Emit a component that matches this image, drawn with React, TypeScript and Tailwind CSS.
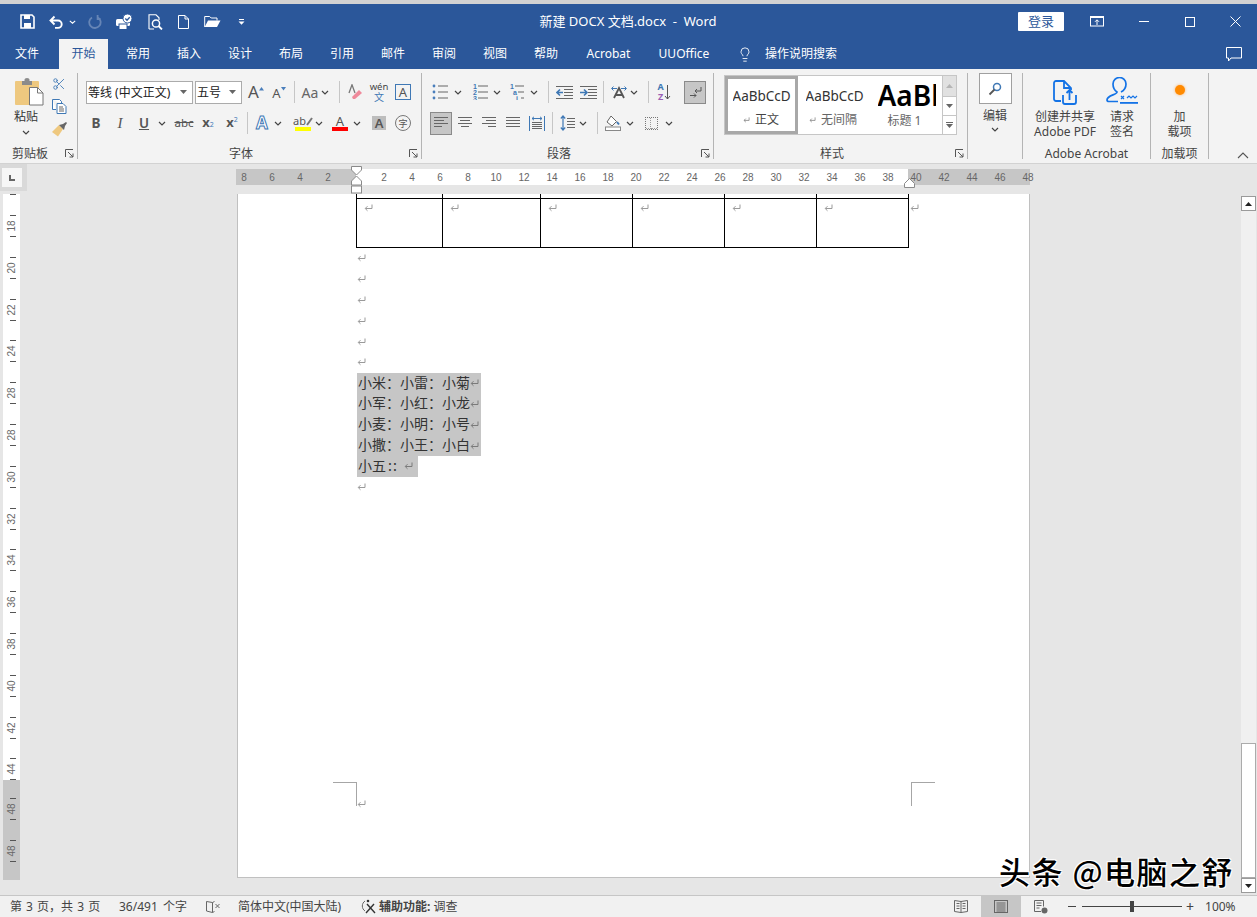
import React from "react";
import { Lightbulb, Scissors } from "lucide-react";

const slot = "flex items-center justify-center shrink-0";

function Chev({ className = "" }: { className?: string }) {
  return (
    <svg width="8" height="5" viewBox="0 0 8 5" className={"shrink-0 " + className}>
      <path d="M1 1l3 3 3-3" fill="none" stroke="#444" strokeWidth="1.2" />
    </svg>
  );
}
function Sep({ className = "" }: { className?: string }) {
  return <div className={"w-px h-[22px] bg-[#c6c6c6] shrink-0 " + className} />;
}
function Launcher() {
  return (
    <div className="w-[17px] pl-[5px] shrink-0 flex items-center">
      <svg width="9" height="9" viewBox="0 0 9 9">
        <path d="M.5 8V.5H8M3 3l5 5M8 4.5V8H4.5" fill="none" stroke="#555" strokeWidth="1" />
      </svg>
    </div>
  );
}
function Footer({ label, launcher = true }: { label: string; launcher?: boolean }) {
  return (
    <div className="h-[12px] flex items-center mt-auto">
      <div className="flex-1 text-center leading-[12px] pt-[2px] whitespace-nowrap">{label}</div>
      {launcher && <Launcher />}
    </div>
  );
}
function Mark({ className = "text-[#9a9a9a]" }: { className?: string }) {
  return (
    <svg width="9" height="8" viewBox="0 0 9 8" className={"shrink-0 " + className}>
      <path d="M8 .5v4H1.500M3.500 2.200L1.200 4.500l2.300 2.300" fill="none" stroke="currentColor" strokeWidth="1" />
    </svg>
  );
}
function Lines({ rows, w = 14 }: { rows: [number, number][]; w?: number }) {
  return (
    <svg width={w} height="14" viewBox={`0 0 ${w} 14`}>
      {rows.map(([a, b], i) => (
        <rect key={i} x={a} y={1 + i * 3} width={b - a} height="1" fill="#666" />
      ))}
    </svg>
  );
}
function ListIcon({ kind }: { kind: "b" | "n" | "m" }) {
  const digits = kind === "m" ? ["1", "a", "i"] : ["1", "2", "3"];
  return (
    <svg width="16" height="16" viewBox="0 0 16 16">
      {[2, 8, 14].map((y, i) => (
        <g key={y}>
          {kind === "b" && <circle cx="2" cy={y} r="1.400" fill="#4a7ebb" />}
          {kind !== "b" && (
            <text
              x={kind === "m" ? 1 + i * 3 : 1}
              y={y + 2.500}
              fontSize="7"
              fontWeight="700"
              fill="#3f78b5"
              fontFamily="Liberation Sans, sans-serif"
            >
              {digits[i]}
            </text>
          )}
          <rect
            x={kind === "m" ? 6 + i * 3 : 6}
            y={y - 0.500}
            width={kind === "m" ? 9 - i * 3 : 10}
            height="1"
            fill="#666"
          />
        </g>
      ))}
    </svg>
  );
}
function Indent({ dir }: { dir: "l" | "r" }) {
  return (
    <svg width="17" height="13" viewBox="0 0 17 13">
      {[0, 3, 6, 9, 12].map((y) => (
        <rect key={y} x={y === 0 || y === 12 ? 0 : 8} y={y} width={y === 0 || y === 12 ? 17 : 9} height="1" fill="#666" />
      ))}
      <path d={dir === "l" ? "M7 6.500H1M4 3.500l-3 3 3 3" : "M0 6.500h6M4 3.500l3 3-3 3"} fill="none" stroke="#3f78b5" strokeWidth="1.600" />
    </svg>
  );
}
function Tiny({ children, w, h }: { children: React.ReactNode; w: number; h: number }) {
  return (
    <svg width={w} height={h} viewBox={`0 0 ${w} ${h}`} className="shrink-0">
      {children}
    </svg>
  );
}

const hTabs = ["常用", "插入", "设计", "布局", "引用", "邮件", "审阅", "视图", "帮助"];
const leftNums = [8, 6, 4, 2];
const midNums = [2, 4, 6, 8, 10, 12, 14, 16, 18, 20, 22, 24, 26, 28, 30, 32, 34, 36, 38];
const rightNums = [40, 42, 44, 46, 48];
const vWhite = [18, 20, 22, 24, 28, 28, 30, 32, 34, 36, 38, 40, 42, 44];
const vGray = [48, 48];
const cells = ["w-[86px]", "w-[98px]", "w-[92px]", "w-[92px]", "w-[92px]", "w-[92px]"];
const selected = ["小米：小雷：小菊", "小军：小红：小龙", "小麦：小明：小号", "小撒：小王：小白"];

function VCell({ n }: { n: number }) {
  return (
    <div className="h-[41.8px] shrink-0 flex flex-col">
      <div className="h-px w-[6px] ml-[7px] bg-[#555] shrink-0" />
      <div className="h-[20px] flex items-center justify-center shrink-0 pl-[1px]">
        <span className="-rotate-90 text-[10px] leading-none text-[#666] font-['Liberation_Sans',sans-serif]">{n}</span>
      </div>
      <div className="h-px w-[6px] ml-[7px] bg-[#555] shrink-0" />
    </div>
  );
}
function HNum({ n }: { n: number }) {
  return <div className="w-7 shrink-0 text-center">{n}</div>;
}

export default function App() {
  return (
    <div className="relative w-[1257px] h-[917px] overflow-hidden flex flex-col bg-[#e6e6e6] text-[12px] text-[#444] font-['Noto_Sans','Noto_Sans_CJK_SC',sans-serif]">
      {/* window top edge */}
      <div className="h-[4px] shrink-0 bg-[#d2d2d2]" />

      {/* title bar */}
      <div className="h-[35px] shrink-0 bg-[#2b579a] flex items-center text-white">
        <div className={slot + " w-[14px] ml-[20px]"}>
          <Tiny w={15} h={15}>
            <path d="M1 1h11l2 2v11H1z" fill="none" stroke="#fff" strokeWidth="1.600" />
            <rect x="4" y="1" width="6" height="4" fill="#fff" />
            <rect x="4" y="9" width="7" height="5" fill="#fff" />
          </Tiny>
        </div>
        <div className={slot + " w-[15px] ml-[15px]"}>
          <Tiny w={15} h={14}>
            <path d="M1.500 5.500H9a3.700 3.700 0 0 1 0 7.400H6M5.500 1.500l-4 4 4 4" fill="none" stroke="#fff" strokeWidth="1.900" />
          </Tiny>
        </div>
        <div className="ml-[5px] flex">
          <Tiny w={7} h={4}>
            <path d="M.8.8l2.700 2.400L6.200.8" fill="none" stroke="#fff" strokeWidth="1.100" />
          </Tiny>
        </div>
        <div className={slot + " w-[14px] ml-[12px]"}>
          <Tiny w={14} h={14}>
            <path d="M9.500 2.200a5.700 5.700 0 1 1-5.500.2M9.600 0v4.200h3.200" fill="none" stroke="#6685b6" strokeWidth="1.800" />
          </Tiny>
        </div>
        <div className={slot + " w-[17px] ml-[14px]"}>
          <Tiny w={17} h={16}>
            <rect x="0" y="5" width="14" height="7" rx="1.500" fill="#fff" />
            <rect x="3" y="10" width="8" height="5.500" fill="#fff" stroke="#2b579a" />
            <circle cx="11.500" cy="4.500" r="4.500" fill="#fff" stroke="#2b579a" />
            <path d="M9.300 4.500l1.700 1.700 2.700-3" fill="none" stroke="#2b579a" strokeWidth="1.300" />
          </Tiny>
        </div>
        <div className={slot + " w-[15px] ml-[15px]"}>
          <Tiny w={15} h={16}>
            <path d="M1 15V.8h7l3 3V6M1 15h5" fill="none" stroke="#fff" strokeWidth="1.100" />
            <circle cx="8" cy="9.500" r="3.600" fill="none" stroke="#fff" strokeWidth="1.500" />
            <path d="M10.500 12l3.500 3.500" stroke="#fff" strokeWidth="1.800" />
          </Tiny>
        </div>
        <div className={slot + " w-[12px] ml-[14px]"}>
          <Tiny w={11} h={14}>
            <path d="M.5 13.500V.5h6.500l3.500 3.500v9.500zM7 .5V4h3.500" fill="none" stroke="#fff" strokeWidth="1" />
          </Tiny>
        </div>
        <div className={slot + " w-[17px] ml-[15px]"}>
          <Tiny w={17} h={13}>
            <path d="M.7 12V1.500h5l1.500 1.500H13v2.500" fill="none" stroke="#fff" strokeWidth="1" />
            <path d="M.7 12L4 5.500h12.500L13 12z" fill="#fff" />
          </Tiny>
        </div>
        <div className={slot + " w-[7px] ml-[17px]"}>
          <Tiny w={7} h={6}>
            <rect x="1" y="0" width="5" height="1" fill="#fff" />
            <path d="M.5 2.500h6L3.500 5.800z" fill="#fff" />
          </Tiny>
        </div>
        <div className="w-[300px] ml-[233px] text-center text-[13px] whitespace-pre leading-none">新建 DOCX 文档.docx  -  Word</div>
        <div className={slot + " ml-[240px] w-[46px] h-[19px] bg-white rounded-[1px] text-[13px] text-[#2b579a]"}>登录</div>
        <div className={slot + " w-[14px] ml-[26px]"}>
          <Tiny w={14} h={11}>
            <rect x=".5" y=".5" width="13" height="9.500" fill="none" stroke="#fff" />
            <rect x="0" y="0" width="14" height="2" fill="#fff" />
            <path d="M7 9V4M5 5.800l2-2 2 2" fill="none" stroke="#fff" />
          </Tiny>
        </div>
        <div className={slot + " w-[11px] ml-[34px]"}>
          <div className="w-[10px] h-px bg-white" />
        </div>
        <div className={slot + " w-[11px] ml-[35px]"}>
          <div className="w-[10px] h-[10px] border border-white" />
        </div>
        <div className={slot + " w-[11px] ml-[35px]"}>
          <Tiny w={11} h={11}>
            <path d="M.5.5l10 10M10.500.5l-10 10" stroke="#fff" strokeWidth="1" />
          </Tiny>
        </div>
      </div>

      {/* tabs */}
      <div className="h-[30px] shrink-0 bg-[#2b579a] flex items-center text-white text-[12px] whitespace-nowrap">
        <div className="w-[59px] pl-[15px]">文件</div>
        <div className={slot + " w-[49px] h-full bg-[#f3f3f3] text-[#2b579a]"}>开始</div>
        <div className="w-[4.5px] shrink-0" />
        {hTabs.map((t) => (
          <div key={t} className="w-[51px] text-center shrink-0">
            {t}
          </div>
        ))}
        <div className="ml-[13.5px] w-[47px] text-center">Acrobat</div>
        <div className="ml-[26px] w-[52px] text-center">UUOffice</div>
        <div className={slot + " ml-[27px] w-[16px]"}>
          <Lightbulb size={17} strokeWidth={1.300} color="#fff" />
        </div>
        <div className="ml-[12px]">操作说明搜索</div>
        <div className={slot + " ml-[389px] w-[16px]"}>
          <Tiny w={16} h={15}>
            <path d="M.5.5h15v10.500H5L2.500 14v-3H.5z" fill="none" stroke="#fff" />
          </Tiny>
        </div>
      </div>

      {/* ribbon */}
      <div className="h-[95px] shrink-0 bg-[#f3f3f3] border-b border-[#d2d2d2] pt-[4px] flex items-start">
        {/* clipboard */}
        <div className="w-[78px] h-[86px] border-r border-[#b4b4b4] shrink-0 flex flex-col">
          <div className="flex">
            <div className="w-[52px] shrink-0 flex flex-col items-center pt-[5px]">
              <div className="ml-[7px] h-[27px]">
                <Tiny w={29} h={28}>
                  <rect x="0" y="3" width="24" height="24" rx="1" fill="#eec87f" />
                  <path d="M7 3h2.500V1.500a2.500 1.500 0 0 1 5 0V3H17v4H7z" fill="#8b8b8b" />
                  <path d="M14.500 9.500h8l5.500 5.500v12H14.500z" fill="#fff" stroke="#777" />
                  <path d="M22.500 9.500V15H28" fill="none" stroke="#777" />
                </Tiny>
              </div>
              <div className="mt-[4px] leading-[16px] text-[#333]">粘贴</div>
              <Chev className="mt-[5px]" />
            </div>
            <div className="flex flex-col -mt-[1px] w-[14px]">
              <div className={slot + " h-[23px]"}>
                <Scissors size={16} color="#3f78b5" strokeWidth={1.500} />
              </div>
              <div className={slot + " h-[23px]"}>
                <Tiny w={15} h={15}>
                  <path d="M.5.5h7l2 2v2M.5.5v10h3.500" fill="#fff" stroke="#3f78b5" />
                  <path d="M5 4.500h6l3 3v7H5z" fill="#fff" stroke="#3f78b5" />
                  <path d="M7 8h4M7 10h5M7 12h5" stroke="#666" />
                </Tiny>
              </div>
              <div className={slot + " h-[23px]"}>
                <Tiny w={16} h={15}>
                  <path d="M8 3l4 4-5 7.500L1 10z" fill="#eec87f" />
                  <path d="M8 3l4-1 3-2 1 1-2 3-1 4z" fill="#666" />
                </Tiny>
              </div>
            </div>
          </div>
          <Footer label="剪贴板" />
        </div>

        {/* font */}
        <div className="w-[344px] h-[86px] border-r border-[#b4b4b4] shrink-0 flex flex-col">
          <div className="flex items-center h-[24px] mt-[7px]">
            <div className="ml-[8px] w-[107px] h-[23px] bg-white border border-[#ababab] flex items-center pl-[1px] pr-[5px] justify-between whitespace-nowrap text-[#222]">
              <span className="pt-px">等线 (中文正文)</span>
              <Tiny w={7} h={4}>
                <path d="M0 0h7L3.500 4z" fill="#666" />
              </Tiny>
            </div>
            <div className="ml-[2px] w-[47px] h-[23px] bg-white border border-[#ababab] flex items-center pl-[1px] pr-[5px] justify-between text-[#222]">
              <span className="pt-px">五号</span>
              <Tiny w={7} h={4}>
                <path d="M0 0h7L3.500 4z" fill="#666" />
              </Tiny>
            </div>
            <div className={slot + " ml-[3px] w-[22px] text-[17px] leading-[20px] text-[#555]"}>
              A
              <Tiny w={5} h={11}>
                <path d="M0 3.500h5L2.500 0z" fill="#4a7ebb" />
              </Tiny>
            </div>
            <div className={slot + " ml-[1px] w-[22px] text-[13px] leading-[20px] text-[#555] pt-[2px]"}>
              A
              <Tiny w={5} h={13}>
                <path d="M0 0h5L2.500 3.500z" fill="#4a7ebb" />
              </Tiny>
            </div>
            <Sep className="ml-[4px]" />
            <div className={slot + " ml-[4px] w-[22px] text-[14px] text-[#666]"}>Aa</div>
            <Chev />
            <Sep className="ml-[10px]" />
            <div className={slot + " ml-[4px] w-[22px]"}>
              <Tiny w={16} h={16}>
                <path d="M2 9L5 .8 8 9" fill="none" stroke="#777" strokeWidth="1.300" />
                <path d="M5 13l7-7 3 3-7 6H6z" fill="#ef8a9b" />
              </Tiny>
            </div>
            <div className={slot + " ml-[2px] w-[22px] flex-col text-[9.5px] text-[#444]"}>
              <span className="leading-[11px]">wén</span>
              <span className="text-[#3f78b5] text-[10px] leading-[11px]">文</span>
            </div>
            <div className={slot + " ml-[2px] w-[22px]"}>
              <div className="w-[16px] h-[16px] border border-[#3f78b5] flex items-center justify-center text-[13px] leading-none text-[#555]">A</div>
            </div>
          </div>
          <div className="flex items-center h-[24px] mt-[7px] text-[#555]">
            <div className={slot + " ml-[6px] w-[24px] font-bold text-[13.5px]"}>B</div>
            <div className={slot + " w-[24px] italic text-[15px] font-['Liberation_Serif',serif]"}>I</div>
            <div className={slot + " w-[24px] underline font-semibold text-[13.5px]"}>U</div>
            <Chev className="ml-[2px]" />
            <div className={slot + " ml-[6px] w-[24px] line-through text-[11.5px]"}>abc</div>
            <div className={slot + " w-[24px] font-bold text-[13px]"}>
              x<sub className="text-[#3f78b5] text-[7px] font-normal">2</sub>
            </div>
            <div className={slot + " w-[24px] font-bold text-[13px]"}>
              x<sup className="text-[#3f78b5] text-[7px] font-normal">2</sup>
            </div>
            <Sep className="ml-[3px]" />
            <div className={slot + " ml-[2px] w-[24px] text-[17px] font-bold text-white [-webkit-text-stroke:1px_#3f78b5]"}>A</div>
            <Chev />
            <div className={slot + " ml-[9px] w-[24px] flex-col"}>
              <div className="flex items-center h-[11px]">
                <span className="text-[11px] leading-[11px]">ab</span>
                <Tiny w={7} h={10}>
                  <path d="M1 9l5-7" stroke="#777" strokeWidth="2" />
                </Tiny>
              </div>
              <div className="w-[16px] h-[4px] bg-[#ffff00] mt-[1px]" />
            </div>
            <Chev />
            <div className={slot + " ml-[5px] w-[24px] flex-col"}>
              <span className="text-[13px] leading-[12px]">A</span>
              <div className="w-[16px] h-[4px] bg-[#ff0000]" />
            </div>
            <Chev className="ml-[1px]" />
            <div className={slot + " ml-[6px] w-[24px]"}>
              <div className="w-[14px] h-[14px] bg-[#bdbdbd] flex items-center justify-center text-[13px] leading-none font-semibold">A</div>
            </div>
            <div className={slot + " w-[24px]"}>
              <div className="w-[16px] h-[16px] rounded-full border border-[#777] flex items-center justify-center text-[9px] leading-none">字</div>
            </div>
          </div>
          <Footer label="字体" />
        </div>

        {/* paragraph */}
        <div className="w-[292px] h-[86px] border-r border-[#b4b4b4] shrink-0 flex flex-col">
          <div className="flex items-center h-[24px] mt-[7px]">
            <div className={slot + " ml-[6px] w-[24px]"}><ListIcon kind="b" /></div>
            <Chev className="ml-[2px]" />
            <div className={slot + " ml-[6px] w-[24px]"}><ListIcon kind="n" /></div>
            <Chev className="ml-[1px]" />
            <div className={slot + " ml-[4px] w-[24px]"}><ListIcon kind="m" /></div>
            <Chev className="ml-[1px]" />
            <Sep className="ml-[10px]" />
            <div className={slot + " ml-[3px] w-[24px]"}><Indent dir="l" /></div>
            <div className={slot + " w-[24px]"}><Indent dir="r" /></div>
            <Sep className="ml-[3px]" />
            <div className={slot + " ml-[4px] w-[22px]"}>
              <Tiny w={16} h={14}>
                <path d="M3 13L8 3l5 10M5 10h6" fill="none" stroke="#555" strokeWidth="1.800" />
                <path d="M1 3.500h5M2.500 1.500l-2 2 2 2M15 3.500h-5M13.500 1.500l2 2-2 2" fill="none" stroke="#3f78b5" strokeWidth="1" />
              </Tiny>
            </div>
            <Chev />
            <Sep className="ml-[10px]" />
            <div className={slot + " ml-[3px] w-[24px]"}>
              <div className="flex flex-col text-[9px] font-bold items-center">
                <span className="text-[#3f78b5] leading-[10px]">A</span>
                <span className="text-[#9a5fb4] leading-[10px]">Z</span>
              </div>
              <Tiny w={7} h={15}>
                <path d="M3.500 0v14M1 11l2.500 3L6 11" fill="none" stroke="#555" />
              </Tiny>
            </div>
            <div className={slot + " ml-[8px] w-[22px] h-[23px] bg-[#c6c6c6] border border-[#8a8a8a]"}>
              <Tiny w={13} h={13}>
                <path d="M12 1v4H6M8 3L6 5l2 2M1 9.500h6M5 7.500l2 2-2 2" fill="none" stroke="#555" />
              </Tiny>
            </div>
          </div>
          <div className="flex items-center h-[24px] mt-[7px]">
            <div className={slot + " ml-[8px] w-[22px] h-[23px] bg-[#c6c6c6] border border-[#8a8a8a]"}>
              <Lines rows={[[0, 14], [0, 10], [0, 14], [0, 8]]} />
            </div>
            <div className={slot + " ml-[2px] w-[22px]"}><Lines rows={[[0, 14], [2, 12], [0, 14], [3, 11]]} /></div>
            <div className={slot + " ml-[2px] w-[22px]"}><Lines rows={[[0, 14], [4, 14], [0, 14], [6, 14]]} /></div>
            <div className={slot + " ml-[2px] w-[22px]"}><Lines rows={[[0, 14], [0, 14], [0, 14], [0, 14]]} /></div>
            <div className={slot + " ml-[2px] w-[22px]"}>
              <Tiny w={16} h={15}>
                <path d="M.5 0v15M15.500 0v15" stroke="#3f78b5" />
                <path d="M3 2.500h10M5 .8L3 2.500l2 1.700M11 .8l2 1.700-2 1.700" fill="none" stroke="#3f78b5" />
                <path d="M3 6.500h10M3 8.500h10M3 10.500h10M3 12.500h10" stroke="#666" />
              </Tiny>
            </div>
            <Sep className="ml-[4px]" />
            <div className={slot + " ml-[3px] w-[22px]"}>
              <Tiny w={15} h={16}>
                <path d="M3 1v14M.8 3.500L3 1l2.200 2.500M.8 12.500L3 15l2.200-2.500" fill="none" stroke="#3f78b5" strokeWidth="1.200" />
                <path d="M7 3.500h8M7 6.500h8M7 9.500h8M7 12.500h8" stroke="#666" />
              </Tiny>
            </div>
            <Chev className="ml-[1px]" />
            <Sep className="ml-[10px]" />
            <div className={slot + " ml-[3px] w-[24px]"}>
              <Tiny w={17} h={16}>
                <path d="M6 1l5.500 5.500L7 11 2 7z" fill="#fff" stroke="#666" />
                <path d="M12 7l2 2.500" stroke="#3f78b5" strokeWidth="2" />
                <rect x=".5" y="12" width="15" height="3.500" fill="#fff" stroke="#888" />
              </Tiny>
            </div>
            <Chev className="ml-[1px]" />
            <div className={slot + " ml-[5px] w-[24px]"}>
              <div className="w-[13px] h-[13px] border border-dotted border-[#777] grid grid-cols-2">
                <div className="border-r border-b border-dotted border-[#999]" />
                <div className="border-b border-dotted border-[#999]" />
              </div>
            </div>
            <Chev className="ml-[2px]" />
          </div>
          <Footer label="段落" />
        </div>

        {/* styles */}
        <div className="w-[254px] h-[86px] border-r border-[#b4b4b4] shrink-0 flex flex-col">
          <div className="mt-[2px] ml-[10px] w-[233px] h-[60px] bg-white border border-[#c6c6c6] flex">
            <div className="w-[73px] h-[58px] border-[3px] border-[#a8a8a8] flex flex-col items-center overflow-hidden shrink-0">
              <div className="w-[58px] mt-[8px] overflow-hidden whitespace-nowrap text-[13.5px] leading-[18px] text-[#333]">AaBbCcDd</div>
              <div className="flex items-center mt-[7px] gap-[4px] leading-[16px] -ml-[2px]">
                <Mark className="scale-75 text-[#777]" />正文
              </div>
            </div>
            <div className="w-[73px] shrink-0 flex flex-col items-center">
              <div className="w-[58px] mt-[11px] overflow-hidden whitespace-nowrap text-[13.5px] leading-[18px] text-[#333]">AaBbCcDd</div>
              <div className="flex items-center mt-[7px] gap-[4px] leading-[16px] text-[#666] -ml-[4px]">
                <Mark className="scale-75 text-[#777]" />无间隔
              </div>
            </div>
            <div className="w-[71px] shrink-0 flex flex-col items-center">
              <div className="w-[58px] mt-[1px] overflow-hidden whitespace-nowrap text-[28px] leading-[36px] font-semibold text-black">AaBbCc</div>
              <div className="leading-[16px] text-[#666] whitespace-nowrap -ml-[4px]">标题 1</div>
            </div>
            <div className="w-[14px] border-l border-[#c6c6c6] flex flex-col shrink-0">
              <div className={slot + " h-[21px] bg-[#e1e1e1] border-b border-[#c6c6c6]"}>
                <Tiny w={7} h={4}><path d="M0 4h7L3.500 0z" fill="#b5b5b5" /></Tiny>
              </div>
              <div className={slot + " h-[19px] border-b border-[#c6c6c6]"}>
                <Tiny w={7} h={4}><path d="M0 0h7L3.500 4z" fill="#666" /></Tiny>
              </div>
              <div className={slot + " flex-1 flex-col gap-[1px]"}>
                <div className="w-[7px] h-px bg-[#666]" />
                <Tiny w={7} h={4}><path d="M0 0h7L3.500 4z" fill="#666" /></Tiny>
              </div>
            </div>
          </div>
          <Footer label="样式" />
        </div>

        {/* editing */}
        <div className="w-[55px] h-[86px] border-r border-[#b4b4b4] shrink-0 flex flex-col items-center">
          <div className={slot + " w-[33px] h-[31px] bg-white border border-[#a0a0a0]"}>
            <Tiny w={14} h={14}>
              <circle cx="9" cy="5" r="3.500" fill="none" stroke="#3f78b5" strokeWidth="1.500" />
              <path d="M6.500 7.500L1.500 12.500" stroke="#555" strokeWidth="1.800" />
            </Tiny>
          </div>
          <div className="mt-[4px] leading-[16px]">编辑</div>
          <Chev className="mt-[3px]" />
        </div>

        {/* acrobat */}
        <div className="w-[128px] h-[86px] border-r border-[#b4b4b4] shrink-0 flex flex-col">
          <div className="flex">
            <div className="ml-[10px] w-[64px] shrink-0 flex flex-col items-center pt-[7px] leading-[15px] whitespace-nowrap">
              <Tiny w={25} h={25}>
                <path d="M8 21H3a2 2 0 0 1-2-2V3a2 2 0 0 1 2-2h8l7 7v2M11 1v7h7" fill="none" stroke="#1473e6" strokeWidth="1.800" />
                <path d="M10 15v7a2 2 0 0 0 2 2h9a2 2 0 0 0 2-2v-7" fill="none" stroke="#1473e6" strokeWidth="1.800" />
                <path d="M16.500 20v-10M13.500 13l3-3 3 3" fill="none" stroke="#1473e6" strokeWidth="1.800" />
              </Tiny>
              <div className="mt-[4px]">创建并共享</div>
              <div>Adobe PDF</div>
            </div>
            <div className="ml-[8px] w-[34px] shrink-0 flex flex-col items-center pt-[4px] leading-[15px] whitespace-nowrap">
              <Tiny w={32} h={28}>
                <path d="M15 15c4-2 5-5 5-8a6.500 6.500 0 0 0-13 0c0 3 1 6 4 8 0 3-10 3-10 8 0 1 1 1.500 2 1.500h9" fill="none" stroke="#1473e6" strokeWidth="1.700" />
                <path d="M15 19l3 3M18 19l-3 3M21 21l2-2 2 2 2-2 2 2 2-2" fill="none" stroke="#1473e6" strokeWidth="1.200" />
                <rect x="14" y="25" width="18" height="1.800" fill="#1473e6" />
              </Tiny>
              <div className="mt-[4px]">请求</div>
              <div>签名</div>
            </div>
          </div>
          <Footer label="Adobe Acrobat" launcher={false} />
        </div>

        {/* add-ins */}
        <div className="w-[58px] h-[86px] border-r border-[#b4b4b4] shrink-0 flex flex-col">
          <div className="flex flex-col items-center pt-[12px] leading-[15px]">
            <div className="w-[10px] h-[10px] rounded-full bg-[#ff8a00] shadow-[0_0_3px_#ffb060]" />
            <div className="mt-[14px]">加</div>
            <div>载项</div>
          </div>
          <Footer label="加载项" launcher={false} />
        </div>

        <div className="flex-1 h-[86px] flex justify-end items-end pr-[8px]">
          <Tiny w={12} h={7}>
            <path d="M1 6l5-5 5 5" fill="none" stroke="#555" strokeWidth="1.100" />
          </Tiny>
        </div>
      </div>

      {/* horizontal ruler row */}
      <div className="h-[30px] shrink-0 relative flex items-start">
        <div className="w-[27px] h-[27px] bg-[#d9d9d9] pl-[2px] pt-[4px] shrink-0">
          <div className={slot + " w-[20px] h-[19px] bg-[#f6f6f6]"}>
            <div className="w-[6px] h-[6px] border-l-2 border-b-2 border-[#666]" />
          </div>
        </div>
        <div className="ml-[209px] mt-[5px] h-[16px] flex text-[10px] leading-[18px] text-[#666] font-['Liberation_Sans',sans-serif]">
          <div className="w-[120px] bg-[#c6c6c6] flex shrink-0">
            <div className="flex -ml-[6px]">
              {leftNums.map((n) => (
                <HNum key={n} n={n} />
              ))}
            </div>
          </div>
          <div className="w-[552px] bg-white flex pl-[14px] shrink-0">
            {midNums.map((n) => (
              <HNum key={n} n={n} />
            ))}
          </div>
          <div className="w-[122px] bg-[#c6c6c6] flex shrink-0">
            <div className="flex -ml-[6px]">
              {rightNums.map((n) => (
                <HNum key={n} n={n} />
              ))}
            </div>
          </div>
        </div>
        {/* indent markers lie over the ruler */}
        <svg width="11" height="28" viewBox="0 0 11 28" className="absolute left-[351px] top-[2px]">
          <path d="M.5.5h10V4L5.500 9 .5 4zM5.500 10l5 5v4H.5v-4z" fill="#fff" stroke="#8a8a8a" />
          <rect x=".5" y="20" width="10" height="7" fill="#fff" stroke="#8a8a8a" />
        </svg>
        <svg width="11" height="10" viewBox="0 0 11 10" className="absolute left-[904px] top-[14px]">
          <path d="M5.500.5l5 5v4H.5v-4z" fill="#fff" stroke="#8a8a8a" />
        </svg>
      </div>

      {/* main */}
      <div className="flex-1 min-h-0 flex items-start">
        <div className="ml-[3px] w-[17px] h-[686px] shrink-0 flex flex-col overflow-hidden">
          <div className="h-[586px] bg-white overflow-hidden shrink-0">
            <div className="h-[21px]">
              <div className="h-px w-[6px] ml-[7px] bg-[#555]" />
            </div>
            {vWhite.map((n, i) => (
              <VCell key={i} n={n} />
            ))}
          </div>
          <div className="h-[100px] bg-[#c6c6c6] overflow-hidden pt-[18px] shrink-0">
            {vGray.map((n, i) => (
              <VCell key={i} n={n} />
            ))}
          </div>
        </div>

        <div className="ml-[217px] w-[793px] h-[684px] bg-white border-x border-b border-[#c0c0c0] shrink-0 flex flex-col pl-[118px]">
          {/* table */}
          <div className="flex shrink-0">
            <div className="flex h-[54px] border-b border-black border-r shrink-0 w-[553px]">
              {cells.map((c, i) => (
                <div key={i} className={c + " border-l border-black flex flex-col shrink-0"}>
                  <div className="h-[4px] shrink-0" />
                  <div className="h-px bg-black -ml-px shrink-0" />
                  <div className="pl-[7px] pt-[5px]">
                    <Mark />
                  </div>
                </div>
              ))}
            </div>
            <Mark className="ml-[1px] mt-[10px] text-[#9a9a9a]" />
          </div>
          {/* paragraphs */}
          {[0, 1, 2, 3, 4, 5].map((i) => (
            <div key={i} className="h-[20.8px] flex items-center shrink-0 pl-px">
              <Mark />
            </div>
          ))}
          <div className="text-[14px] text-[#333] font-['Noto_Sans_CJK_SC',sans-serif]">
            {selected.map((t) => (
              <div key={t} className="h-[20.8px] w-[124px] ml-px bg-[#c6c6c6] flex items-center pl-px whitespace-nowrap">
                <span className="pb-[2px]">{t}</span>
                <Mark className="text-[#7a7a7a]" />
              </div>
            ))}
            <div className="h-[20.8px] w-[61px] ml-px bg-[#c6c6c6] flex items-center pl-px whitespace-nowrap">
              <span className="pb-[2px]">小五</span>
              <span className="ml-[2px] tracking-[1px] pb-[2px]">::</span>
              <Mark className="ml-[6px] text-[#7a7a7a]" />
            </div>
          </div>
          <div className="h-[20.8px] flex items-center shrink-0 pl-px">
            <Mark />
          </div>
          {/* crop marks */}
          <div className="mt-auto mb-[71px] h-[24px] flex items-end -ml-[23px] pr-[94px] shrink-0">
            <div className="w-[24px] h-[24px] border-t border-r border-[#a6a6a6] shrink-0" />
            <Mark className="-mb-[2px] text-[#9a9a9a]" />
            <div className="ml-auto w-[24px] h-[24px] border-t border-l border-[#a6a6a6] shrink-0" />
          </div>
        </div>

        {/* scrollbar */}
        <div className="ml-[211px] mt-[2px] w-[15px] h-[697px] bg-[#f0f0f0] flex flex-col shrink-0">
          <div className={slot + " h-[15px] bg-white border border-[#9a9a9a]"}>
            <Tiny w={7} h={4}><path d="M0 4h7L3.500 0z" fill="#222" /></Tiny>
          </div>
          <div className="mt-auto h-[135px] bg-white border border-[#ababab]" />
          <div className={slot + " h-[15px] bg-white border border-[#9a9a9a]"}>
            <Tiny w={7} h={4}><path d="M0 0h7L3.500 4z" fill="#222" /></Tiny>
          </div>
        </div>
      </div>

      {/* status bar */}
      <div className="h-[22px] shrink-0 bg-[#f1f1f1] border-t border-[#c6c6c6] flex items-center whitespace-nowrap text-[#444]">
        <div className="ml-[10px] w-[90px] [word-spacing:1px]">第 3 页，共 3 页</div>
        <div className="ml-[19px] w-[68px] [word-spacing:2px]">36/491 个字</div>
        <div className={slot + " ml-[19px] w-[14px]"}>
          <Tiny w={14} h={12}>
            <path d="M6.500 1.500L.5 .5v9.500l6 1.500zM6.500 1.500L8.500 .5M6.500 11.500l2-1" fill="none" stroke="#666" />
            <path d="M9.500 3l4 4M13.500 3l-4 4" stroke="#666" />
          </Tiny>
        </div>
        <div className="ml-[18px] w-[104px]">简体中文(中国大陆)</div>
        <div className={slot + " ml-[18px] w-[16px]"}>
          <Tiny w={16} h={15}>
            <path d="M5 2a6 6 0 0 0 0 10" fill="none" stroke="#666" />
            <path d="M7 5l8 9M14 5l-8 9" stroke="#333" strokeWidth="1.400" />
            <circle cx="8" cy="2" r="1.300" fill="#333" />
          </Tiny>
        </div>
        <div className="ml-[3px] w-[80px]">
          <span className="font-bold">辅助功能:</span> 调查
        </div>
        <div className={slot + " ml-[495px] w-[14px]"}>
          <Tiny w={14} h={13}>
            <path d="M7 1.500L.5 .5v11l6.500 1 6.500-1V.5zM7 1.500v11M2.500 3.500h3M2.500 6h3M2.500 8.500h3M8.500 3.500h3M8.500 6h3M8.500 8.500h3" fill="none" stroke="#666" />
          </Tiny>
        </div>
        <div className={slot + " ml-[13px] w-[40px] h-full bg-[#c6c6c6]"}>
          <Tiny w={14} h={13}>
            <rect x=".5" y=".5" width="13" height="12" fill="none" stroke="#666" />
            <path d="M2.500 3h9M2.500 5h9M2.500 7h9M2.500 9h9M2.500 11h9" stroke="#666" />
          </Tiny>
        </div>
        <div className={slot + " ml-[13px] w-[14px]"}>
          <Tiny w={14} h={14}>
            <path d="M7 11.500H.5V.5h9v6M2.500 3h5M2.500 5.500h5M2.500 8h3" fill="none" stroke="#666" />
            <circle cx="10.500" cy="10.500" r="3" fill="#666" />
          </Tiny>
        </div>
        <div className="ml-[20px] w-[8px] h-px bg-[#444] shrink-0" />
        <div className="ml-[6px] w-[100px] h-px bg-[#444] shrink-0 flex items-center justify-center">
          <div className="w-[4px] h-[11px] bg-[#444] shrink-0" />
        </div>
        <div className="ml-[4px] text-[14px] leading-none text-[#444]">+</div>
        <div className="ml-[11px]">100%</div>
      </div>

      {/* watermark */}
      <div className="absolute left-[999px] top-[853px] text-[31px] leading-[36px] tracking-[1.5px] font-medium text-black whitespace-nowrap font-['Noto_Sans_CJK_SC',sans-serif] [text-shadow:1px_1px_0_#fff,-1px_-1px_0_#fff,1px_-1px_0_#fff,-1px_1px_0_#fff]">
        头条 @电脑之舒
      </div>
    </div>
  );
}
